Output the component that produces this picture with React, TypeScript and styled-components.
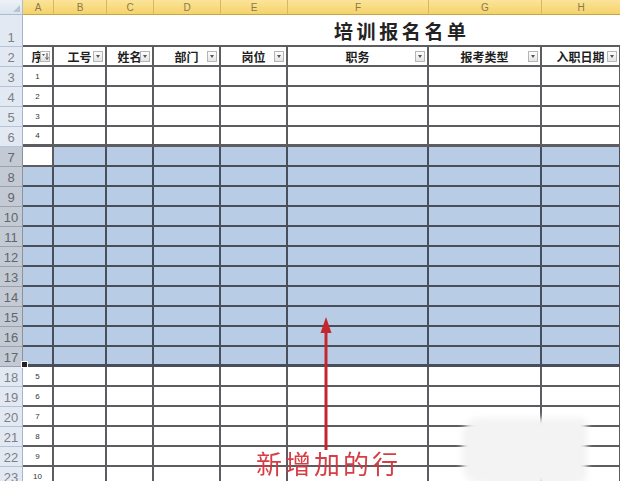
import React from 'react';
import styled, { createGlobalStyle, css } from 'styled-components';

const GlobalStyle = createGlobalStyle`
  html, body { margin: 0; padding: 0; background: #ffffff; }
  body { width: 620px; height: 481px; overflow: hidden; font-family: "Liberation Sans", "Noto Sans CJK SC", sans-serif; }
`;

const COLS = '23px 31px 53px 47px 67px 67px 141px 113px 79px 40px';
const CJK = `"Noto Sans CJK SC", "Noto Sans CJK TC", sans-serif`;
const LINE = 'rgba(30, 30, 36, 0.72)';

const Page = styled.div`
  position: relative;
  width: 620px;
  height: 481px;
  overflow: hidden;
  background: #fff;
`;

const Sheet = styled.div`
  display: flex;
  flex-direction: column;
  width: 661px;
`;

const Row = styled.div<{ $h: number }>`
  display: grid;
  grid-template-columns: ${COLS};
  height: ${(p) => p.$h}px;
`;

const Corner = styled.div`
  background: linear-gradient(#eef2f8, #dbe3ee);
  border-right: 1px solid #a9bcd2;
  border-bottom: 1px solid #a9bcd2;
  position: relative;
  &::after {
    content: '';
    position: absolute;
    right: 2px;
    bottom: 2px;
    border-left: 7px solid transparent;
    border-bottom: 7px solid #b9c3cf;
  }
`;

const ColHead = styled.div`
  background: linear-gradient(#fbe49a, #f5d26a);
  border-right: 1px solid #d9b85a;
  border-bottom: 1px solid #c9a54a;
  display: flex;
  align-items: center;
  justify-content: center;
  font-family: "Liberation Sans", sans-serif;
  font-size: 10px;
  color: #8a7a4e;
`;

const RowHead = styled.div<{ $sel?: boolean }>`
  background: ${(p) => (p.$sel ? '#c4cad3' : '#e2e9f3')};
  border-right: 1px solid ${(p) => (p.$sel ? '#8a929c' : '#a3b6cc')};
  border-bottom: 1px solid ${(p) => (p.$sel ? '#9aa2ac' : '#b4c4d6')};
  display: flex;
  align-items: flex-end;
  justify-content: center;
  padding-bottom: 1px;
  box-sizing: border-box;
  font-family: "Liberation Sans", sans-serif;
  font-size: 13px;
  color: ${(p) => (p.$sel ? '#5f6670' : '#7b8089')};
`;

const TitleCell = styled.div`
  grid-column: 2 / -1;
  border-bottom: 2px solid ${LINE};
  display: flex;
  align-items: center;
  padding-left: 311px;
  font-family: ${CJK};
  font-size: 19px;
  font-weight: 700;
  letter-spacing: 3.6px;
  color: #222;
`;

const Cell = styled.div<{ $sel?: boolean; $active?: boolean; $thick?: boolean }>`
  position: relative;
  box-sizing: border-box;
  border-right: 2px solid ${LINE};
  border-bottom: ${(p) => (p.$thick ? 3 : 2)}px solid ${LINE};
  background: ${(p) => (p.$sel && !p.$active ? '#b8cce6' : '#ffffff')};
  display: flex;
  align-items: center;
  justify-content: center;
  font-family: "Liberation Sans", sans-serif;
  font-size: 8px;
  color: #333;
`;

const HeadCell = styled(Cell)`
  font-family: ${CJK};
  font-size: 12px;
  font-weight: 700;
  color: #1e1e1e;
`;

const FilterBtn = styled.span<{ $sort?: boolean }>`
  position: absolute;
  right: 2px;
  top: 4px;
  width: 10px;
  height: 11px;
  box-sizing: border-box;
  border: 1px solid #b5b5b5;
  background: linear-gradient(#fdfdfd, #e4e4e4);
  display: flex;
  align-items: center;
  justify-content: center;
  ${(p) =>
    !p.$sort &&
    css`
      &::after {
        content: '';
        border-left: 2.5px solid transparent;
        border-right: 2.5px solid transparent;
        border-top: 3px solid #555;
      }
    `}
`;

const FillHandle = styled.span`
  position: absolute;
  left: -2px;
  bottom: -4px;
  width: 5px;
  height: 5px;
  background: #222;
  border: 1px solid #fff;
  z-index: 2;
`;

const ArrowWrap = styled.svg`
  position: absolute;
  left: 316px;
  top: 314px;
`;

const Label = styled.div`
  position: absolute;
  left: 256px;
  top: 444px;
  font-family: ${CJK};
  font-size: 26px;
  letter-spacing: 3px;
  color: #d4343c;
  opacity: 0.95;
`;

const Patch = styled.div`
  position: absolute;
  left: 462px;
  top: 418px;
  width: 125px;
  height: 66px;
  background: #f3f3f3;
  border-radius: 18px 6px 10px 20px;
  filter: blur(3px);
`;

const letters = ['A', 'B', 'C', 'D', 'E', 'F', 'G', 'H', ''];
const headers = ['序', '工号', '姓名', '部门', '岗位', '职务', '报考类型', '入职日期', ''];

const SortIcon = () => (
  <svg width="8" height="9" viewBox="0 0 8 9">
    <path d="M1 2 L4 2 L2.5 4 Z" fill="#555" />
    <path d="M6 1 V7 M4.5 5.5 L6 7.5 L7.5 5.5" stroke="#555" strokeWidth="1" fill="none" />
  </svg>
);

type DataRow = { n: number; num?: string; sel?: boolean; thick?: boolean };

const rows: DataRow[] = [];
for (let n = 3; n <= 23; n++) {
  let num: string | undefined;
  if (n >= 3 && n <= 6) num = String(n - 2);
  if (n >= 18) num = String(n - 13);
  rows.push({ n, num, sel: n >= 7 && n <= 17, thick: n === 6 || n === 17 });
}

export default function App() {
  return (
    <Page>
      <GlobalStyle />
      <Sheet>
        <Row $h={15}>
          <Corner />
          {letters.map((l, i) => (
            <ColHead key={i}>{l}</ColHead>
          ))}
        </Row>
        <Row $h={32}>
          <RowHead>1</RowHead>
          <TitleCell>培训报名名单</TitleCell>
        </Row>
        <Row $h={20}>
          <RowHead>2</RowHead>
          {headers.map((h, i) => (
            <HeadCell key={i}>
              {h}
              {h && (i === 0 ? (
                <FilterBtn $sort>
                  <SortIcon />
                </FilterBtn>
              ) : (
                <FilterBtn />
              ))}
            </HeadCell>
          ))}
        </Row>
        {rows.map((r) => (
          <Row $h={20} key={r.n}>
            <RowHead $sel={r.sel}>{r.n}</RowHead>
            {letters.map((_, i) => (
              <Cell key={i} $sel={r.sel} $active={r.n === 7 && i === 0} $thick={r.thick}>
                {i === 0 ? r.num : null}
                {r.n === 17 && i === 0 && <FillHandle />}
              </Cell>
            ))}
          </Row>
        ))}
      </Sheet>
      <Patch />
      <ArrowWrap width="20" height="140" viewBox="0 0 20 140">
        <path d="M10 18 V136" stroke="#c4262e" strokeWidth="3" />
        <path d="M10 3 L4.5 19 L15.5 19 Z" fill="#c4262e" />
      </ArrowWrap>
      <Label>新增加的行</Label>
    </Page>
  );
}
